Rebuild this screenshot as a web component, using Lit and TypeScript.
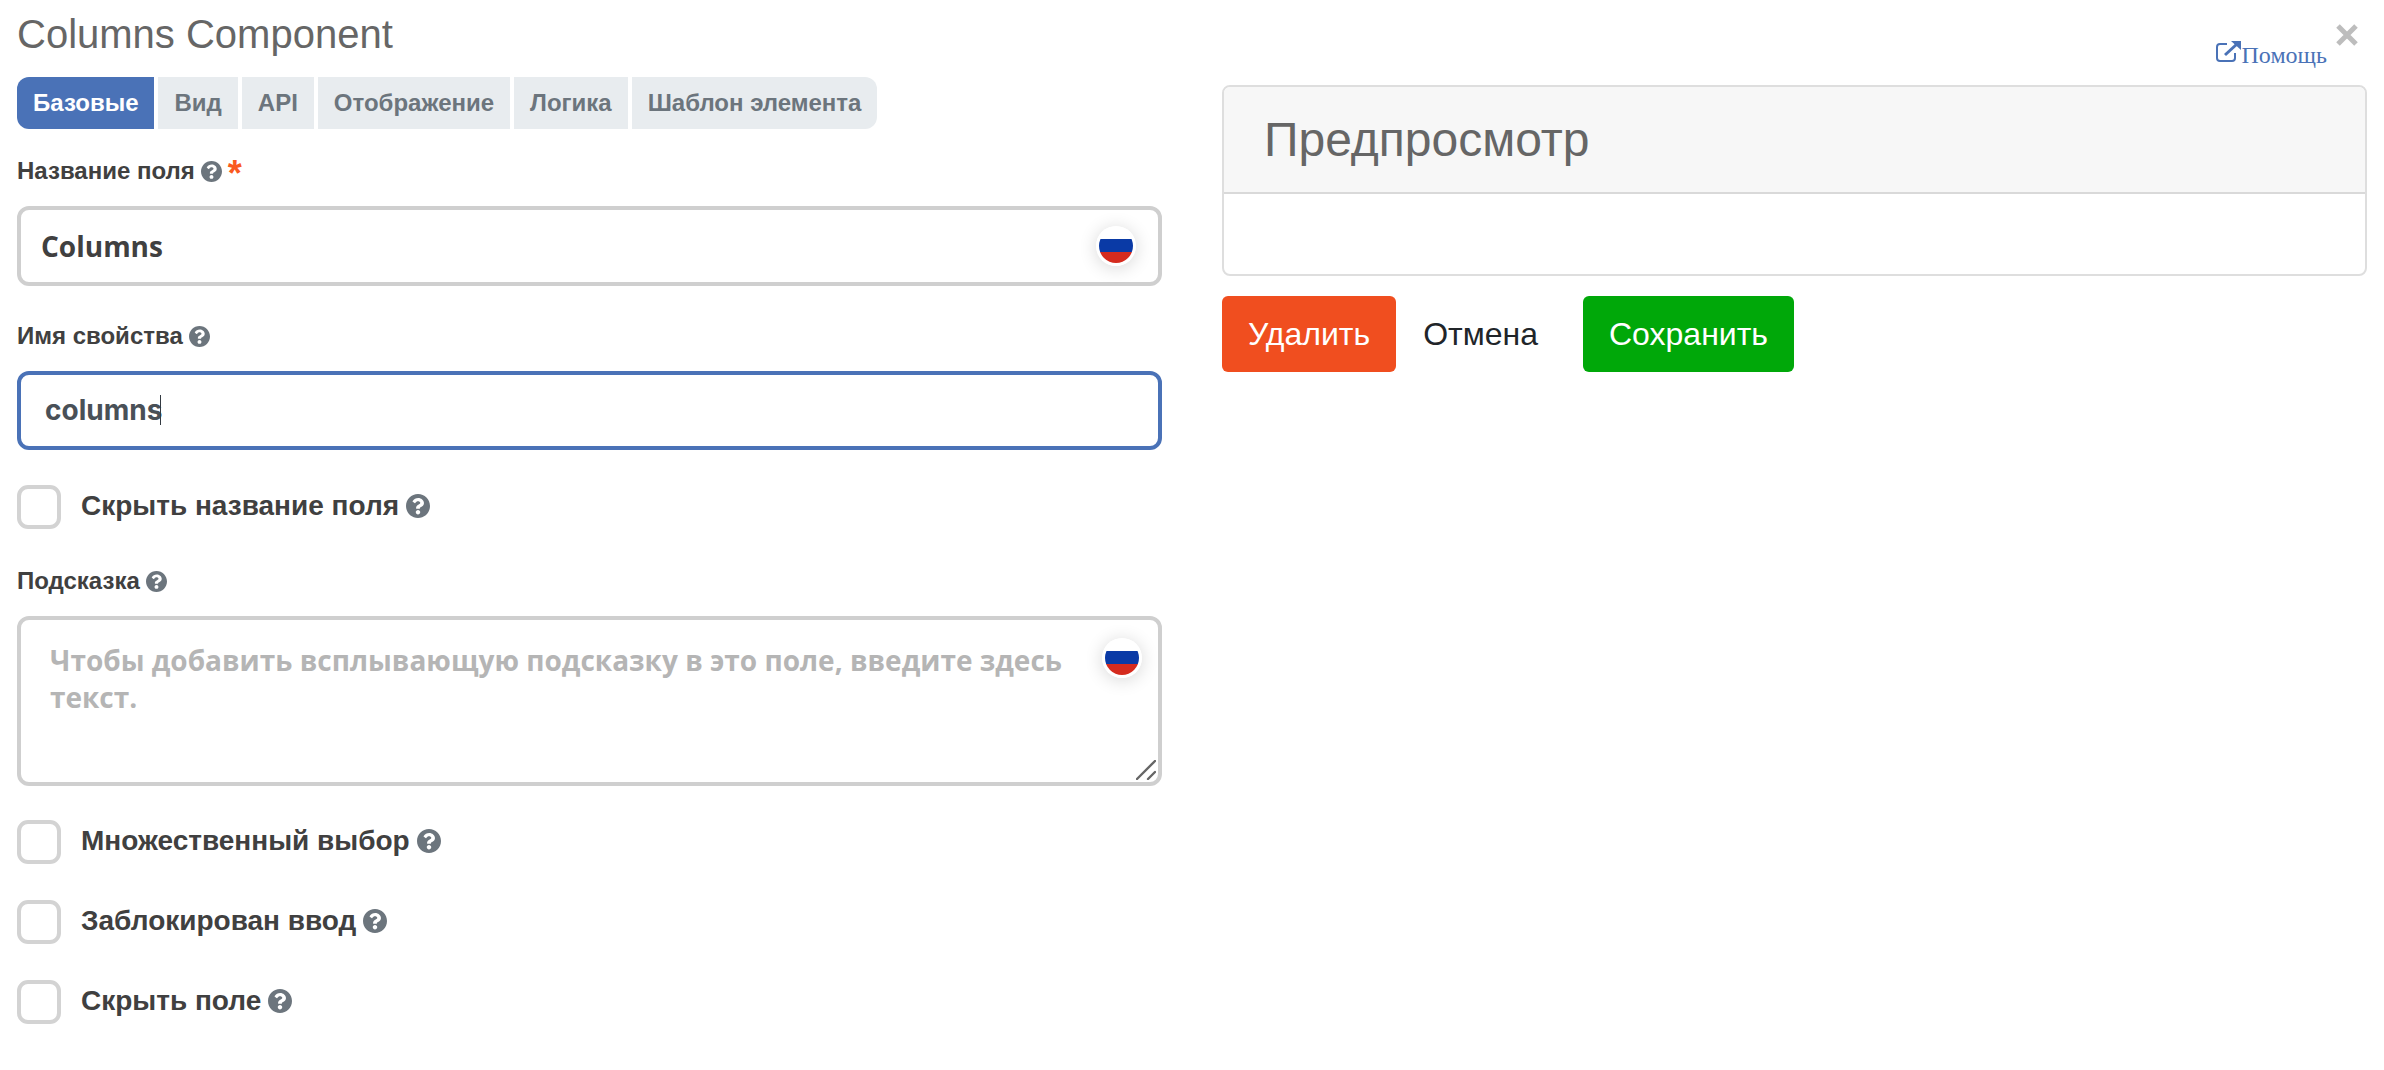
import { LitElement, html, css, svg } from 'lit'
import { customElement } from 'lit/decorators.js'

const tabs = ['Базовые', 'Вид', 'API', 'Отображение', 'Логика', 'Шаблон элемента']

const helpIcon = (size: 'sm' | 'lg') => html`
	<svg class="help ${size}" viewBox="8 8 496 496" fill="currentColor">
		<path d="M504 256c0 136.997-111.043 248-248 248S8 392.997 8 256C8 119.083 119.043 8 256 8s248 111.083 248 248zM262.655 90c-54.497 0-89.255 22.957-116.549 63.758-3.536 5.286-2.353 12.415 2.715 16.258l34.699 26.31c5.205 3.947 12.621 3.008 16.665-2.122 17.864-22.658 30.113-35.797 57.303-35.797 20.429 0 45.698 13.148 45.698 32.958 0 14.976-12.363 22.667-32.534 33.976C247.128 238.528 216 254.941 216 296v4c0 6.627 5.373 12 12 12h56c6.627 0 12-5.373 12-12v-1.333c0-28.462 83.186-29.647 83.186-106.667 0-58.002-60.165-102-116.531-102zM256 338c-25.365 0-46 20.635-46 46 0 25.364 20.635 46 46 46s46-20.636 46-46c0-25.365-20.635-46-46-46z" />
	</svg>
`

const flag = () => html`
	<svg class="flag" viewBox="0 0 40 40">
		<circle cx="20" cy="20" r="20" fill="#fff" />
		<clipPath id="flag-clip"><circle cx="20" cy="20" r="17" /></clipPath>
		${svg`<g clip-path="url(#flag-clip)">
			<rect x="0" y="13" width="40" height="13" fill="#0a3aa6" />
			<rect x="0" y="26" width="40" height="14" fill="#d52b1e" />
		</g>`}
	</svg>
`

@customElement('app-root')
export class AppRoot extends LitElement {
	static styles = css`
		:host {
			display: block;
			min-height: 1070px;
			background: #fff;
			font-family: 'Liberation Sans', Arial, sans-serif;
		}
		.page {
			display: flex;
			gap: 60px;
			padding: 0 17px;
		}
		.left,
		.right {
			flex: 1 1 0;
			min-width: 0;
		}
		h2 {
			margin: 9px 0 18px;
			font-size: 40px;
			font-weight: 400;
			line-height: 50px;
			color: #666;
		}
		.tabs {
			display: flex;
			gap: 4px;
			margin-bottom: 25px;
		}
		.tab {
			display: flex;
			align-items: center;
			height: 52px;
			padding: 0 16px;
			background: #e8ecef;
			color: #6c757d;
			font-size: 24px;
			font-weight: 700;
		}
		.tab.active {
			background: #4a72b7;
			color: #fff;
		}
		.tab:first-child {
			border-radius: 12px 0 0 12px;
		}
		.tab:last-child {
			border-radius: 0 12px 12px 0;
		}
		.label {
			display: flex;
			align-items: center;
			gap: 6px;
			height: 34px;
			margin-bottom: 18px;
			font-size: 24px;
			font-weight: 700;
			color: #404040;
		}
		.star {
			align-self: flex-start;
			margin-top: 3px;
			font-size: 36px;
			line-height: 34px;
			color: #fa5a20;
		}
		.help {
			flex: none;
			color: #6c757d;
		}
		.help.sm {
			width: 21px;
			height: 21px;
		}
		.help.lg {
			width: 24px;
			height: 24px;
		}
		.control {
			position: relative;
			margin-bottom: 33px;
		}
		input,
		textarea {
			display: block;
			box-sizing: border-box;
			width: 100%;
			margin: 0;
			border: 4px solid #cfcfcf;
			border-radius: 12px;
			outline: none;
			background: #fff;
			font-family: 'Open Sans', sans-serif;
			font-size: 28px;
			font-weight: 700;
			color: #404040;
		}
		input {
			height: 80px;
			padding: 0 20px;
		}
		input.focus {
			height: 79px;
			padding: 0 24px 2px;
			border-color: #4a72b7;
			font-family: Inter, sans-serif;
			font-weight: 700;
			color: #495057;
		}
		textarea {
			height: 170px;
			padding: 22px 29px;
			line-height: 37px;
			resize: none;
		}
		textarea::placeholder {
			color: #b5b5b5;
			opacity: 1;
		}
		.caret {
			position: absolute;
			left: 143px;
			top: 24px;
			width: 1px;
			height: 30px;
			background: #333a42;
		}
		.grip {
			position: absolute;
			right: 6px;
			bottom: 6px;
			width: 20px;
			height: 20px;
		}
		.flag {
			position: absolute;
			width: 40px;
			height: 40px;
			border-radius: 50%;
			box-shadow: 0 2px 18px rgba(0, 0, 0, 0.16);
		}
		.control .flag {
			right: 26px;
			top: 20px;
		}
		.control.area .flag {
			right: 20px;
			top: 22px;
		}
		.control.area {
			margin-bottom: 34px;
		}
		.check {
			display: flex;
			align-items: center;
			gap: 20px;
			margin-bottom: 36px;
			font-size: 28px;
			font-weight: 700;
			color: #404040;
		}
		.check.first {
			margin-bottom: 35px;
		}
		.box {
			flex: none;
			box-sizing: border-box;
			width: 44px;
			height: 44px;
			border: 4px solid #d3d3d3;
			border-radius: 11px;
		}
		.check .text {
			display: flex;
			align-items: center;
			gap: 7px;
			padding-bottom: 2px;
		}
		.top {
			display: flex;
			justify-content: flex-end;
			align-items: flex-start;
			gap: 9px;
			height: 85px;
			padding-right: 9px;
			box-sizing: border-box;
		}
		.top a {
			display: flex;
			align-items: flex-start;
			gap: 1px;
			margin-top: 40px;
			font-family: 'Liberation Serif', 'Times New Roman', serif;
			font-size: 24px;
			line-height: 30px;
			color: #4a72b7;
			text-decoration: none;
		}
		.top a svg {
			width: 25px;
			height: 22px;
		}
		.close {
			width: 22px;
			height: 22px;
			margin-top: 24px;
		}
		.card {
			border: 2px solid #dedede;
			border-radius: 8px;
			overflow: hidden;
		}
		.card header {
			box-sizing: border-box;
			height: 107px;
			padding: 0 40px;
			background: #f7f7f7;
			border-bottom: 2px solid #d9d9d9;
			font-size: 48px;
			line-height: 105px;
			color: #666;
		}
		.card .body {
			height: 80px;
		}
		.actions {
			display: flex;
			gap: 1px;
			margin-top: 20px;
		}
		button {
			height: 76px;
			padding: 0 26px;
			border: 0;
			border-radius: 6px;
			background: transparent;
			font-family: inherit;
			font-size: 32px;
			color: #212529;
		}
		button.danger {
			background: #f04e1f;
			color: #fff;
		}
		button.save {
			margin-left: 18px;
			background: #00a809;
			color: #fff;
		}
	`

	private check(text: string, first = false) {
		return html`
			<div class="check ${first ? 'first' : ''}">
				<span class="box"></span>
				<span class="text">${text} ${helpIcon('lg')}</span>
			</div>
		`
	}

	render() {
		return html`
			<div class="page">
				<div class="left">
					<h2>Columns Component</h2>
					<div class="tabs">
						${tabs.map((t, i) => html`<div class="tab ${i === 0 ? 'active' : ''}">${t}</div>`)}
					</div>
					<div class="label">Название поля ${helpIcon('sm')}<span class="star">*</span></div>
					<div class="control">
						<input value="Columns" />
						${flag()}
					</div>
					<div class="label">Имя свойства ${helpIcon('sm')}</div>
					<div class="control" style="margin-bottom: 35px">
						<input class="focus" value="columns" />
						<span class="caret"></span>
					</div>
					${this.check('Скрыть название поля', true)}
					<div class="label">Подсказка ${helpIcon('sm')}</div>
					<div class="control area">
						<textarea placeholder="Чтобы добавить всплывающую подсказку в это поле, введите здесь текст."></textarea>
						${flag()}
						<svg class="grip" viewBox="0 0 20 20" stroke="#666" stroke-width="2.4" stroke-linecap="round">
							<path d="M1 19L19 1M12 19l7-7" />
						</svg>
					</div>
					${this.check('Множественный выбор')}
					${this.check('Заблокирован ввод')}
					${this.check('Скрыть поле')}
				</div>
				<div class="right">
					<div class="top">
						<a href="#">
							<svg viewBox="0 0 25 22" fill="none" stroke="currentColor" stroke-width="2">
								<path d="M11 4H4a3 3 0 0 0-3 3v11a3 3 0 0 0 3 3h12a3 3 0 0 0 3-3v-5" />
								<path d="M9 15L21 4" stroke-width="3" />
								<path d="M15 1h10v9z" fill="currentColor" stroke="none" />
							</svg>
							Помощь
						</a>
						<svg class="close" viewBox="0 0 22 22" stroke="#bdbdbd" stroke-width="5">
							<path d="M2 2l18 18M20 2L2 20" />
						</svg>
					</div>
					<div class="card">
						<header>Предпросмотр</header>
						<div class="body"></div>
					</div>
					<div class="actions">
						<button class="danger">Удалить</button>
						<button>Отмена</button>
						<button class="save">Сохранить</button>
					</div>
				</div>
			</div>
		`
	}
}
